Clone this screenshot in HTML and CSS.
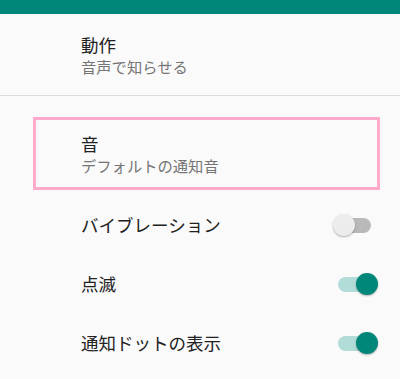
FILE: index.html
```html
<!DOCTYPE html>
<html lang="ja">
<head>
    <meta charset="UTF-8">
    <meta name="viewport" content="width=device-width, initial-scale=1.0">
    <title>通知設定</title>
    <link rel="stylesheet" href="styles.css">
</head>
<body>
    <div class="toolbar"></div>

    <div class="pref pref-two">
        <div class="pref-text">
            <p class="title">動作</p>
            <p class="summary">音声で知らせる</p>
        </div>
    </div>

    <div class="divider"></div>

    <!-- highlighted item -->
    <div class="pref pref-two pref-marked">
        <div class="pref-text">
            <p class="title">音</p>
            <p class="summary">デフォルトの通知音</p>
        </div>
    </div>

    <div class="switch-list">
        <div class="pref pref-one">
            <p class="title">バイブレーション</p>
            <div class="switch"><span class="track"></span><span class="thumb"></span></div>
        </div>
        <div class="pref pref-one">
            <p class="title">点滅</p>
            <div class="switch on"><span class="track"></span><span class="thumb"></span></div>
        </div>
        <div class="pref pref-one">
            <p class="title">通知ドットの表示</p>
            <div class="switch on"><span class="track"></span><span class="thumb"></span></div>
        </div>
    </div>
</body>
</html>
```

FILE: styles.css
```css
body {
    margin: 0;
    background-color: #fafafa;
    font-family: "Noto Sans CJK JP", "Noto Sans", sans-serif;
    overflow: hidden;
}

p {
    margin: 0;
}

.toolbar {
    height: 14px;
    background-color: #01877a;
}

.pref {
    display: flex;
    align-items: center;
    padding-left: 81px;
}

.pref-two {
    height: 81px;
}

.title {
    font-size: 17.5px;
    line-height: 23px;
    color: #212121;
}

.summary {
    font-size: 15.3px;
    line-height: 21px;
    color: #757575;
}

.divider {
    height: 1px;
    background-color: #dcdcdc;
}

.pref-marked {
    box-sizing: border-box;
    width: 347px;
    height: 73px;
    margin: 21px 0 0 33px;
    padding-left: 45px;
    border: 3px solid #ffaacb;
}

.switch-list {
    margin-top: 5px;
}

.pref-one {
    height: 59px;
    justify-content: space-between;
    padding-right: 21px;
}

/* switch */
.switch {
    position: relative;
    width: 46px;
    height: 24px;
}

.track {
    position: absolute;
    left: 5px;
    top: 5px;
    width: 33px;
    height: 15px;
    border-radius: 8px;
    background-color: #b9b9b9;
}

.thumb {
    position: absolute;
    left: 0;
    top: 1px;
    width: 22px;
    height: 22px;
    border-radius: 50%;
    background-color: #ececec;
    box-shadow: 0 1px 2px rgba(0, 0, 0, 0.3);
}

.switch.on .track {
    background-color: #b2dcd8;
}

.switch.on .thumb {
    left: 23px;
    background-color: #01877a;
}
```
